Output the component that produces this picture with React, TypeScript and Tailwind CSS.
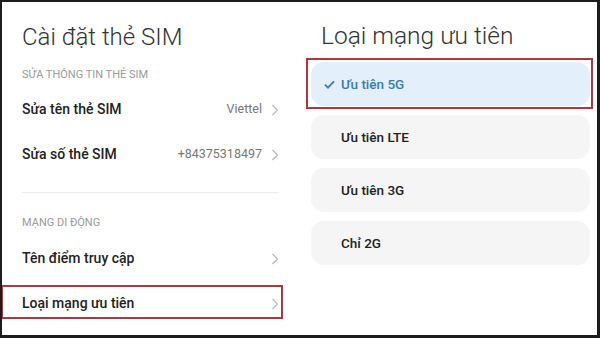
import React from "react";

const Chevron = () => (
  <svg width="8" height="12" viewBox="0 0 8 12" className="shrink-0">
    <path d="M1.5 1 L6.5 6 L1.5 11" fill="none" stroke="#b5b5b5" strokeWidth="1.1" />
  </svg>
);

const Check = () => (
  <svg width="11" height="9" viewBox="0 0 11 9" className="shrink-0">
    <path d="M1 4.6 L4 7.6 L10 1.4" fill="none" stroke="#3a7ab5" strokeWidth="1.8" />
  </svg>
);

function Row({ label, value, boxed }: { label: string; value?: string; boxed?: boolean }) {
  return (
    <div className="relative h-[45px] flex items-center justify-between">
      <span className="text-[14px] font-medium text-[#222]">{label}</span>
      <div className="flex items-center gap-[9px]">
        {value && <span className="text-[12.5px] text-[#777]">{value}</span>}
        <Chevron />
      </div>
      {boxed && (
        <div className="absolute left-[-21px] top-[4px] w-[282px] h-[34px] border-2 border-[#b3353e]" />
      )}
    </div>
  );
}

function Option({ label, selected }: { label: string; selected?: boolean }) {
  return (
    <div
      className={
        "relative h-[44px] rounded-[13px] flex items-center pl-[30px] " +
        (selected ? "bg-[#e3f0fb]" : "bg-[#f5f5f5]")
      }
    >
      {selected && (
        <div className="absolute left-[13px] top-[18px]">
          <Check />
        </div>
      )}
      <span className={"text-[13.5px] font-medium " + (selected ? "text-[#3a7ab5]" : "text-[#222]")}>{label}</span>
      {selected && (
        <div className="absolute left-[-5px] top-[-4px] right-[-3px] bottom-[-3px] border-2 border-[#b3353e]" />
      )}
    </div>
  );
}

export default function App() {
  return (
    <div
      className="w-[600px] h-[338px] bg-white border-t-[2px] border-l-[2px] border-r-[3px] border-b-[3px] border-[#1c1c1c] flex overflow-hidden"
      style={{ fontFamily: "Roboto, 'Noto Sans', sans-serif" }}
    >
      <div className="w-[298px] pl-[20px] pr-[21px] flex flex-col">
        <div className="mt-[21px] h-[28px] leading-[28px] text-[24px] font-light text-[#333]">Cài đặt thẻ SIM</div>
        <div className="mt-[17px] h-[14px] leading-[14px] text-[11px] text-[#9a9a9a]">SỬA THÔNG TIN THẺ SIM</div>
        <div className="mt-[5px]">
          <Row label="Sửa tên thẻ SIM" value="Viettel" />
          <Row label="Sửa số thẻ SIM" value="+84375318497" />
        </div>
        <div className="mt-[15px] h-px bg-[#ececec]" />
        <div className="mt-[23px] h-[14px] leading-[14px] text-[11px] text-[#9a9a9a]">MẠNG DI ĐỘNG</div>
        <div className="mt-[6px]">
          <Row label="Tên điểm truy cập" />
          <Row label="Loại mạng ưu tiên" boxed />
        </div>
      </div>
      <div className="flex-1 pl-[11px] pr-[7px] flex flex-col">
        <div className="mt-[20px] ml-[10px] h-[28px] leading-[28px] text-[24.5px] font-light text-[#333]">Loại mạng ưu tiên</div>
        <div className="mt-[12px] flex flex-col gap-[9px]">
          <Option label="Ưu tiên 5G" selected />
          <Option label="Ưu tiên LTE" />
          <Option label="Ưu tiên 3G" />
          <Option label="Chỉ 2G" />
        </div>
      </div>
    </div>
  );
}
